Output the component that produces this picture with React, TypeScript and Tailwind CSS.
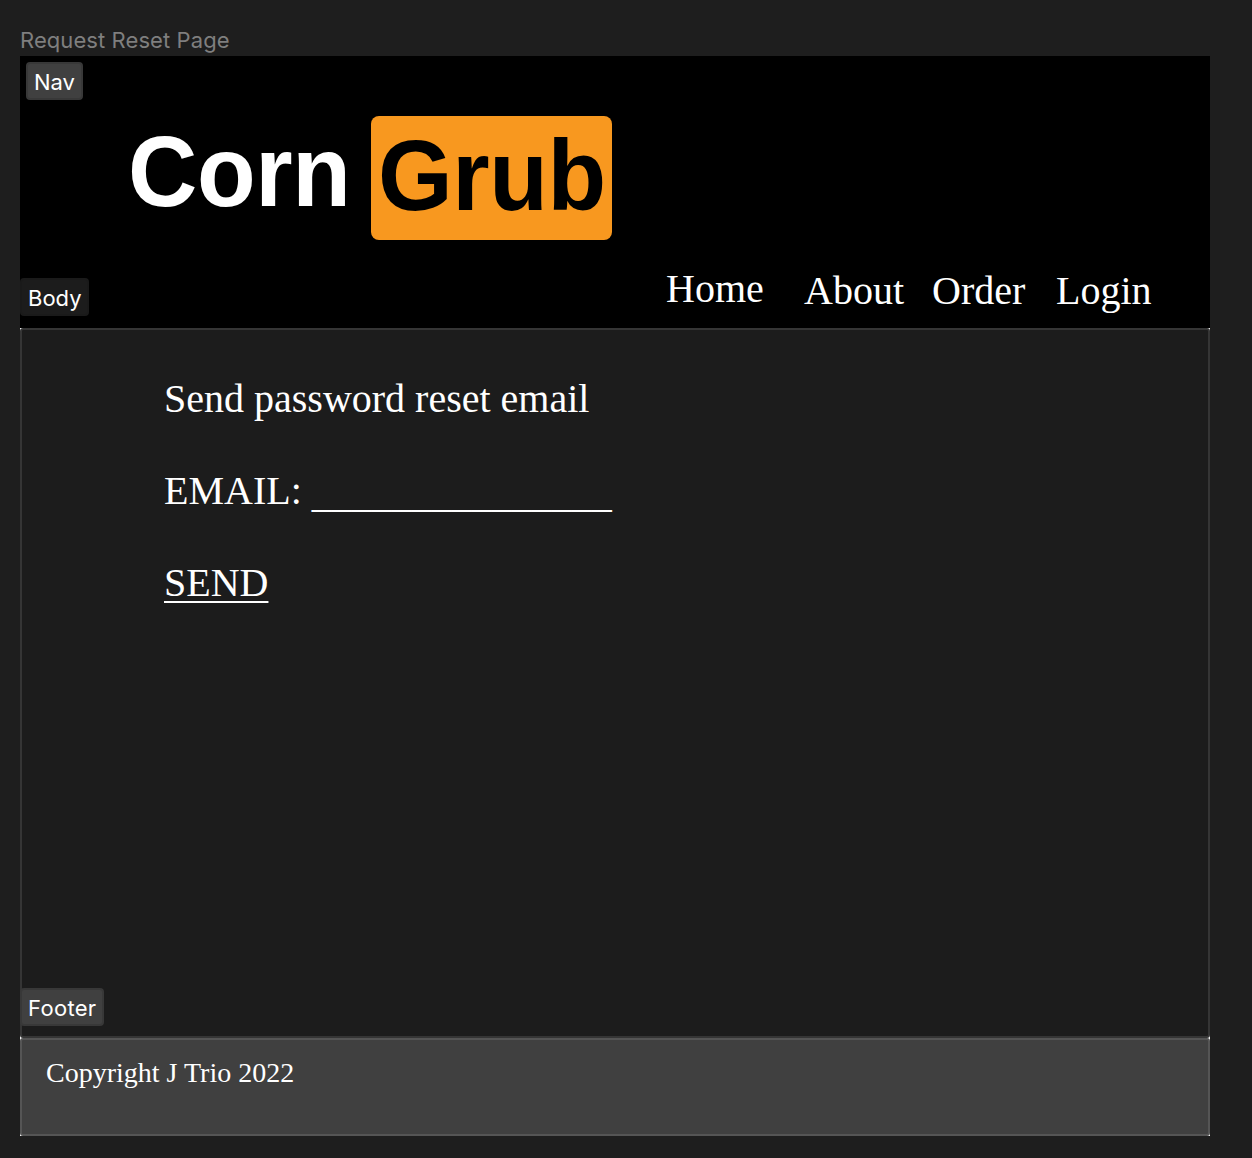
import type { ReactNode } from "react";

function FrameLabel({ children, className }: { children: ReactNode; className: string }) {
  return (
    <span
      className={`absolute z-10 flex h-[38px] items-center rounded-[4px] border-2 pl-1.5 pt-0.5 font-[Inter,sans-serif] text-[22px] leading-7 text-white ${className}`}
    >
      {children}
    </span>
  );
}

function Logo() {
  return (
    <div className="flex items-start pl-[108px] pt-[60px] font-['Liberation_Sans',sans-serif] text-[96px] font-bold leading-[110px] tracking-[-0.4px]">
      <span className="w-[243px] text-white">
        <span className="inline-block origin-[0_89px] translate-y-0.5 scale-y-[1.035]">Corn</span>
      </span>
      <span className="h-[124px] w-[241px] rounded-lg bg-[#f8981f] pl-[7px] pt-1 text-black">
        <span className="inline-block origin-[0_89px] translate-y-0.5 scale-y-[1.035]">Grub</span>
      </span>
    </div>
  );
}

export default function App() {
  return (
    <div className="h-[1158px] w-[1252px] overflow-hidden bg-[#1e1e1e] px-5 pt-6 font-['Liberation_Serif',serif] text-white">
      <div className="h-8 font-[Inter,sans-serif] text-[22px] leading-8 tracking-[0.08px] text-[#7f7f7f]">
        Request Reset Page
      </div>
      <div className="flex h-[1080px] w-[1190px] flex-col bg-white">
        <header className="relative h-[272px] bg-black">
          <FrameLabel className="left-1.5 top-1.5 w-[57px] border-[#383838] bg-[#404040]">Nav</FrameLabel>
          <Logo />
          <nav className="flex pl-[646px] pt-7 text-[40px] leading-[46px]">
            <a className="-mt-0.5 w-[138px]">Home</a>
            <a className="w-[128px]">About</a>
            <a className="w-[124px]">Order</a>
            <a>Login</a>
          </nav>
        </header>
        <main className="relative h-[710px] rounded-[3px] border-2 border-[#353535] bg-[#1c1c1c] pl-[142px] pt-[46px] text-[40px] leading-[46px]">
          <FrameLabel className="-left-0.5 -top-[52px] w-[69px] border-[#1a1a1a] bg-[#1c1c1c]">Body</FrameLabel>
          <p>Send password reset email</p>
          <p className="mt-[46px]">
            EMAIL: <span className="inline-block translate-y-[3px]">_______________</span>
          </p>
          <p className="mt-[46px]">
            <a className="underline decoration-2 underline-offset-[5px]">SEND</a>
          </p>
        </main>
        <footer className="relative h-[98px] rounded-[3px] border-2 border-[#555555] bg-[#404040] pl-6 pt-[17px] text-[28px] leading-8">
          <FrameLabel className="-left-0.5 -top-[52px] w-[84px] border-[#383838] bg-[#404040] tracking-[0.3px]">Footer</FrameLabel>
          Copyright J Trio 2022
        </footer>
      </div>
    </div>
  );
}
